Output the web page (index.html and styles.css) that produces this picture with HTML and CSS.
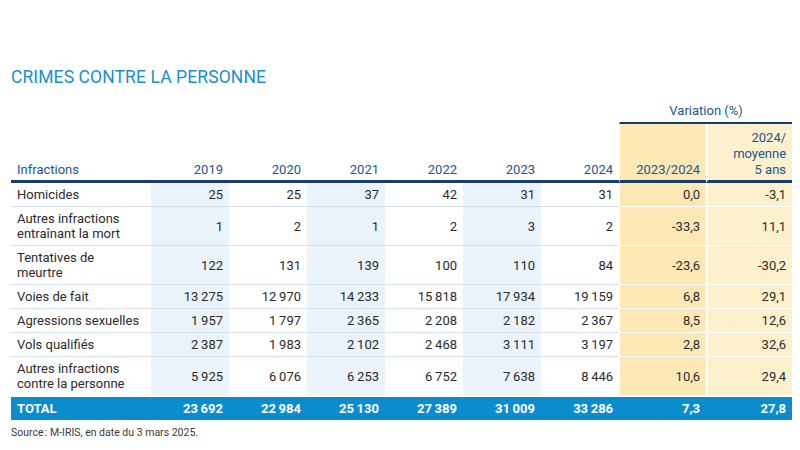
FILE: index.html
```html
<!DOCTYPE html>
<html lang="fr">
<head>
<meta charset="utf-8">
<title>Crimes contre la personne</title>
<link rel="stylesheet" href="styles.css">
</head>
<body>
<h1 class="title">CRIMES CONTRE LA PERSONNE</h1>
<table class="stats">
  <colgroup>
    <col class="c-label">
    <col class="c-year"><col class="c-year"><col class="c-year">
    <col class="c-year"><col class="c-year"><col class="c-year">
    <col class="c-var1"><col class="c-var2">
  </colgroup>
  <thead>
    <tr class="h1">
      <th colspan="7" class="blank"></th>
      <th colspan="2" class="var-group">Variation (%)</th>
    </tr>
    <tr class="h2">
      <th class="label">Infractions</th>
      <th class="shade">2019</th>
      <th>2020</th>
      <th class="shade">2021</th>
      <th>2022</th>
      <th class="shade">2023</th>
      <th>2024</th>
      <th class="v1">2023/2024</th>
      <th class="v2">2024/<br>moyenne<br>5 ans</th>
    </tr>
  </thead>
  <tbody>
    <tr>
      <td class="label">Homicides</td>
      <td class="shade">25</td><td>25</td><td class="shade">37</td><td>42</td><td class="shade">31</td><td>31</td>
      <td class="v1">0,0</td><td class="v2">-3,1</td>
    </tr>
    <tr>
      <td class="label">Autres infractions<br>entraînant la mort</td>
      <td class="shade">1</td><td>2</td><td class="shade">1</td><td>2</td><td class="shade">3</td><td>2</td>
      <td class="v1">-33,3</td><td class="v2">11,1</td>
    </tr>
    <tr>
      <td class="label">Tentatives de<br>meurtre</td>
      <td class="shade">122</td><td>131</td><td class="shade">139</td><td>100</td><td class="shade">110</td><td>84</td>
      <td class="v1">-23,6</td><td class="v2">-30,2</td>
    </tr>
    <tr>
      <td class="label">Voies de fait</td>
      <td class="shade">13&#8201;275</td><td>12&#8201;970</td><td class="shade">14&#8201;233</td><td>15&#8201;818</td><td class="shade">17&#8201;934</td><td>19&#8201;159</td>
      <td class="v1">6,8</td><td class="v2">29,1</td>
    </tr>
    <tr>
      <td class="label">Agressions sexuelles</td>
      <td class="shade">1&#8201;957</td><td>1&#8201;797</td><td class="shade">2&#8201;365</td><td>2&#8201;208</td><td class="shade">2&#8201;182</td><td>2&#8201;367</td>
      <td class="v1">8,5</td><td class="v2">12,6</td>
    </tr>
    <tr>
      <td class="label">Vols qualifiés</td>
      <td class="shade">2&#8201;387</td><td>1&#8201;983</td><td class="shade">2&#8201;102</td><td>2&#8201;468</td><td class="shade">3&#8201;111</td><td>3&#8201;197</td>
      <td class="v1">2,8</td><td class="v2">32,6</td>
    </tr>
    <tr class="last">
      <td class="label">Autres infractions<br>contre la personne</td>
      <td class="shade">5&#8201;925</td><td>6&#8201;076</td><td class="shade">6&#8201;253</td><td>6&#8201;752</td><td class="shade">7&#8201;638</td><td>8&#8201;446</td>
      <td class="v1">10,6</td><td class="v2">29,4</td>
    </tr>
    <tr class="total">
      <td class="label">TOTAL</td>
      <td>23&#8201;692</td><td>22&#8201;984</td><td>25&#8201;130</td><td>27&#8201;389</td><td>31&#8201;009</td><td>33&#8201;286</td>
      <td>7,3</td><td>27,8</td>
    </tr>
  </tbody>
</table>
<p class="source">Source&#8239;: M-IRIS, en date du 3 mars 2025.</p>
</body>
</html>
```

FILE: styles.css
```css
html, body {
  margin: 0;
  background: #ffffff;
}

body {
  padding: 67px 8px 0 11px;
  font-family: Roboto, "Liberation Sans", sans-serif;
  color: #2b2b2b;
}

.title {
  margin: 0 0 14px 0;
  font-size: 17.5px;
  line-height: 20px;
  font-weight: 400;
  color: #1b8fca;
  letter-spacing: 0.1px;
}

.stats {
  width: 781px;
  table-layout: fixed;
  border-collapse: separate;
  border-spacing: 0;
  font-size: 13px;
  line-height: 15px;
}

.c-label { width: 140px; }
.c-year { width: 78px; }
.c-var1 { width: 87px; }
.c-var2 { width: 86px; }

.stats th {
  font-weight: 400;
  color: #23568a;
  text-align: right;
  vertical-align: bottom;
  line-height: 16px;
  padding: 6px 6px 2px 6px;
  white-space: nowrap;
}

.stats .h1 th {
  padding: 2px 6px 3px 6px;
}

.stats .h1 .var-group {
  text-align: center;
  border-bottom: 2px solid #1c3c6a;
  border-left: 1px solid #fff;
}

.stats .h2 th {
  border-bottom: 3px solid #1c3c6a;
}

.stats th.label,
.stats td.label {
  text-align: left;
}

.stats td {
  text-align: right;
  vertical-align: middle;
  padding: 4px 6px 4px 6px;
  border-bottom: 1px solid #d3e0eb;
  white-space: nowrap;
}

.stats .shade {
  background: #eaf2fa;
}

.stats .h2 th.shade {
  background: transparent;
}

.stats .v1 {
  background: #fde8b6;
  border-left: 1px solid #fff;
}

.stats .v2 {
  background: #fdf0cd;
  border-left: 2px solid #fff;
}

.stats td.v1,
.stats td.v2 {
  border-bottom-color: #ffffff;
}

.stats .last td {
  border-bottom: 2px solid #ffffff;
}

.stats .total td {
  background: #0b8dcd;
  color: #ffffff;
  font-weight: 700;
  border-bottom: none;
  border-left: none;
  padding: 4px 6px 4px 6px;
}

.source {
  margin: 6px 0 0 0;
  font-size: 10.5px;
  line-height: 14px;
  color: #3a3a3a;
}
```
